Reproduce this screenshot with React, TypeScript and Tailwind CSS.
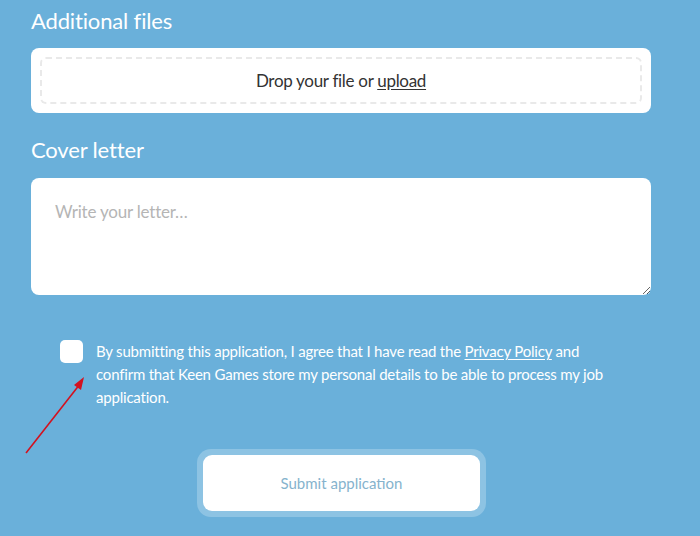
import React from "react";

export default function App() {
  return (
    <div
      className="relative w-[700px] h-[536px] overflow-hidden bg-[#6ab0da] text-white"
      style={{ fontFamily: "Lato, 'Noto Sans', sans-serif" }}
    >
      <div className="ml-[31px] w-[620px] flex flex-col">
        <h2 className="mt-[8px] text-[22px] leading-[26px] font-normal tracking-[-0.15px]">Additional files</h2>
        <div className="mt-[14px] h-[65px] p-[9px] bg-white rounded-[8px]">
          <div className="h-full rounded-[6px] border-2 border-dashed border-[#e9e9e9] flex items-center justify-center text-[17px] tracking-[-0.3px] text-[#333333]">
            <span>
              Drop your file or <span className="underline underline-offset-2">upload</span>
            </span>
          </div>
        </div>
        <h2 className="mt-[24px] text-[22px] leading-[26px] font-normal tracking-[-0.15px]">Cover letter</h2>
        <textarea
          className="mt-[15px] h-[117px] w-full rounded-[8px] bg-white px-[24px] pt-[22px] text-[17px] leading-[24px] tracking-[-0.2px] text-[#333] placeholder:text-[#b5b5b5] outline-none"
          placeholder="Write your letter…"
        />
        <div className="mt-[45px] ml-[29px] flex items-start gap-[13px]">
          <div className="w-[23px] h-[23px] shrink-0 rounded-[5px] bg-white" />
          <p className="text-[15px] leading-[23px] tracking-[-0.2px]">
            By submitting this application, I agree that I have read the{" "}
            <span className="underline underline-offset-2">Privacy Policy</span> and
            <br />
            confirm that Keen Games store my personal details to be able to process my job
            <br />
            application.
          </p>
        </div>
        <div className="mt-[40px] ml-[166px] w-[289px] h-[68px] rounded-[14px] bg-[#8dc3e3] p-[6px]">
          <div className="h-full w-full rounded-[9px] bg-white flex items-center justify-center text-[15px] text-[#86b3cd]">
            Submit application
          </div>
        </div>
      </div>
      <svg className="absolute left-0 top-0 pointer-events-none" width="700" height="536">
        <line x1="26" y1="453" x2="80" y2="384" stroke="#d3111f" strokeWidth="1.6" />
        <polygon points="84,377 74,385 81,390" fill="#d3111f" />
      </svg>
    </div>
  );
}
